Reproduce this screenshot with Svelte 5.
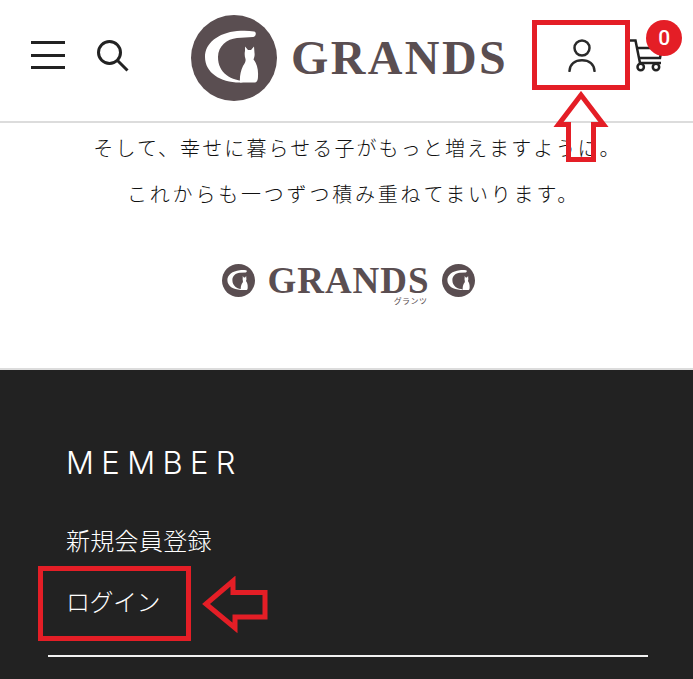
<script>
  const lead = ["そして、幸せに暮らせる子がもっと増えますように。", "これからも一つずつ積み重ねてまいります。"];
</script>

{#snippet mark(cls, catCls = "")}
  <svg class={cls} viewBox="0 0 86 86" aria-hidden="true">
    <circle cx="43" cy="43" r="43" fill="#5a4e51" />
    <path fill="#fff" d="M63 16.500C58 15.500 52 15.500 46 16C27 18 14 28 14 42C14 58 30 68 50 67.500L56 66C40 66 27 58 27 42C27 31 36 24 46 23L62 22C65 21.500 66 17 63 16.500Z" />
    <path class={catCls} fill="#fff" d="M54 31.500L57 35H60L63 31.500L63.500 38C64 41 63 43 62.500 44.500C65.500 48 67.500 54 67 61C67 64 66.500 67 64 67.500L49 67.500C48.500 62 49.500 56 52 51C54 48 55 46 54.500 44C53.500 41 53.500 38 54 36Z" />
  </svg>
{/snippet}

<div class="page">
  <header class="top">
    <div class="left-icons">
      <div class="burger"><span></span><span></span><span></span></div>
      <svg class="search" viewBox="0 0 32 32" aria-hidden="true">
        <circle cx="12.500" cy="12.500" r="11" />
        <path d="M20.500 20.500L30.500 30.500" />
      </svg>
    </div>
    <div class="brand">
      {@render mark("mark-lg")}
      <span class="word">GRANDS</span>
    </div>
    <div class="right-icons">
      <svg class="user" viewBox="0 0 28 34" aria-hidden="true">
        <circle cx="14" cy="10" r="7.500" />
        <path d="M1.500 33C2 26 7 22.300 14 22.300S26 26 26.500 33" />
      </svg>
      <div class="cart">
        <svg viewBox="0 0 34 34" aria-hidden="true">
          <path d="M0 1.500H6.500L11 24H32" />
          <path d="M7.500 9H33L31 19H9.500" />
          <circle cx="11.700" cy="28" r="3.200" />
          <circle cx="27" cy="28" r="3.200" />
        </svg>
        <span class="badge">0</span>
      </div>
    </div>
  </header>

  <section class="intro">
    {#each lead as line}
      <p>{line}</p>
    {/each}
    <div class="sub-brand">
      {@render mark("mark-sm")}
      <div class="sub-word">
        <span class="word small">GRANDS</span>
        <span class="kana">グランツ</span>
      </div>
      {@render mark("mark-sm", "cat-right")}
    </div>
  </section>

  <footer class="foot">
    <h2>MEMBER</h2>
    <ul>
      <li>新規会員登録</li>
      <li>ログイン</li>
    </ul>
    <hr />
  </footer>

  <div class="note box-user"></div>
  <div class="note box-login"></div>
  <svg class="note arrow-up" viewBox="0 0 56 72" aria-hidden="true">
    <path d="M28 4L50.500 33.500H40.500V68.500H15.500V33.500H5.500Z" />
  </svg>
  <svg class="note arrow-left" viewBox="0 0 66 58" aria-hidden="true">
    <path d="M4 28L31 5V16.500H63V41H33V52Z" />
  </svg>
</div>

<style>
  :global(body) {
    margin: 0;
    background: #fff;
  }

  .page {
    position: relative;
    width: 693px;
    height: 679px;
    overflow: hidden;
    font-family: "Noto Sans CJK JP", sans-serif;
  }

  .top {
    height: 121px;
    border-bottom: 2px solid #dcdcdc;
    display: flex;
    align-items: flex-start;
  }

  .left-icons {
    display: flex;
    align-items: flex-start;
    gap: 32px;
    margin: 40px 0 0 31px;
  }

  .burger {
    width: 34px;
    display: flex;
    flex-direction: column;
    gap: 9.500px;
    padding-top: 1px;
  }

  .burger span {
    height: 3px;
    background: #222;
  }

  .search {
    width: 32px;
    height: 32px;
    fill: none;
    stroke: #222;
    stroke-width: 3;
  }

  .brand {
    display: flex;
    align-items: center;
    gap: 14px;
    margin: 15px 0 0 62px;
  }

  .mark-lg {
    width: 86px;
    height: 86px;
  }

  .word {
    font-family: "Liberation Serif", serif;
    font-weight: 700;
    font-size: 48px;
    line-height: 1;
    color: #5a4e51;
    letter-spacing: 2.400px;
  }

  .right-icons {
    display: flex;
    align-items: flex-start;
    margin-left: 60px;
  }

  .user {
    width: 28px;
    height: 34px;
    margin-top: 38px;
    fill: none;
    stroke: #2a2a2a;
    stroke-width: 2.500;
    stroke-linecap: round;
  }

  .cart {
    position: relative;
    margin: 39px 0 0 33px;
  }

  .cart svg {
    display: block;
    width: 34px;
    height: 34px;
    fill: none;
    stroke: #222;
    stroke-width: 2.500;
  }

  .badge {
    position: absolute;
    top: -19px;
    left: 17px;
    width: 36px;
    height: 36px;
    border-radius: 50%;
    background: #e41e26;
    color: #fff;
    font-family: Roboto, sans-serif;
    font-weight: 500;
    font-size: 21px;
    text-align: center;
    line-height: 36px;
  }

  .intro {
    height: 247px;
    padding-top: 2px;
    box-sizing: border-box;
    text-align: center;
    border-bottom: 2px solid #dcdcdc;
  }

  .intro p {
    margin: 0;
    font-size: 20px;
    font-weight: 300;
    line-height: 46px;
    letter-spacing: 2.100px;
    padding-left: 22px;
    color: #111;
  }

  .intro p + p {
    letter-spacing: 2.800px;
    padding-left: 14px;
  }

  .sub-brand {
    display: flex;
    justify-content: center;
    align-items: flex-start;
    gap: 12px;
    margin-top: 47px;
    padding-left: 4px;
  }

  .mark-sm {
    width: 33px;
    height: 33px;
  }

  .cat-right {
    transform: translateX(5px);
  }

  .sub-word {
    display: flex;
    flex-direction: column;
    align-items: flex-end;
    height: 33px;
  }

  .word.small {
    font-size: 37px;
    line-height: 28px;
    letter-spacing: 1px;
    margin-top: 3px;
  }

  .kana {
    font-size: 8px;
    line-height: 8px;
    color: #5a4e51;
    letter-spacing: 0.500px;
    margin: 2px 2px 0 0;
  }

  .foot {
    height: 310px;
    background: #222;
    color: #fff;
    padding: 75px 45px 0 48px;
    box-sizing: border-box;
  }

  .foot h2 {
    margin: 0 0 0 18px;
    font-family: Inter, sans-serif;
    font-weight: 300;
    font-size: 31px;
    line-height: 36px;
    letter-spacing: 7.400px;
  }

  .foot ul {
    list-style: none;
    margin: 41px 0 0 18px;
    padding: 0 0 11px;
  }

  .foot li {
    font-size: 24px;
    font-weight: 300;
    line-height: 36px;
    letter-spacing: 0.300px;
    margin-bottom: 25px;
  }

  .foot li:last-child {
    letter-spacing: -0.500px;
  }

  .foot hr {
    margin: 0;
    border: 0;
    height: 2px;
    background: #f2f2f2;
  }

  .note {
    position: absolute;
    box-sizing: border-box;
  }

  .box-user,
  .box-login {
    border: 5px solid #e41e26;
  }

  .box-user {
    left: 532px;
    top: 20px;
    width: 98px;
    height: 70px;
  }

  .box-login {
    left: 38px;
    top: 566px;
    width: 153px;
    height: 75px;
  }

  .arrow-up,
  .arrow-left {
    fill: none;
    stroke: #e41e26;
    stroke-width: 5;
  }

  .arrow-up {
    left: 553px;
    top: 91px;
    width: 56px;
    height: 72px;
  }

  .arrow-left {
    left: 202px;
    top: 576px;
    width: 66px;
    height: 58px;
  }
</style>
